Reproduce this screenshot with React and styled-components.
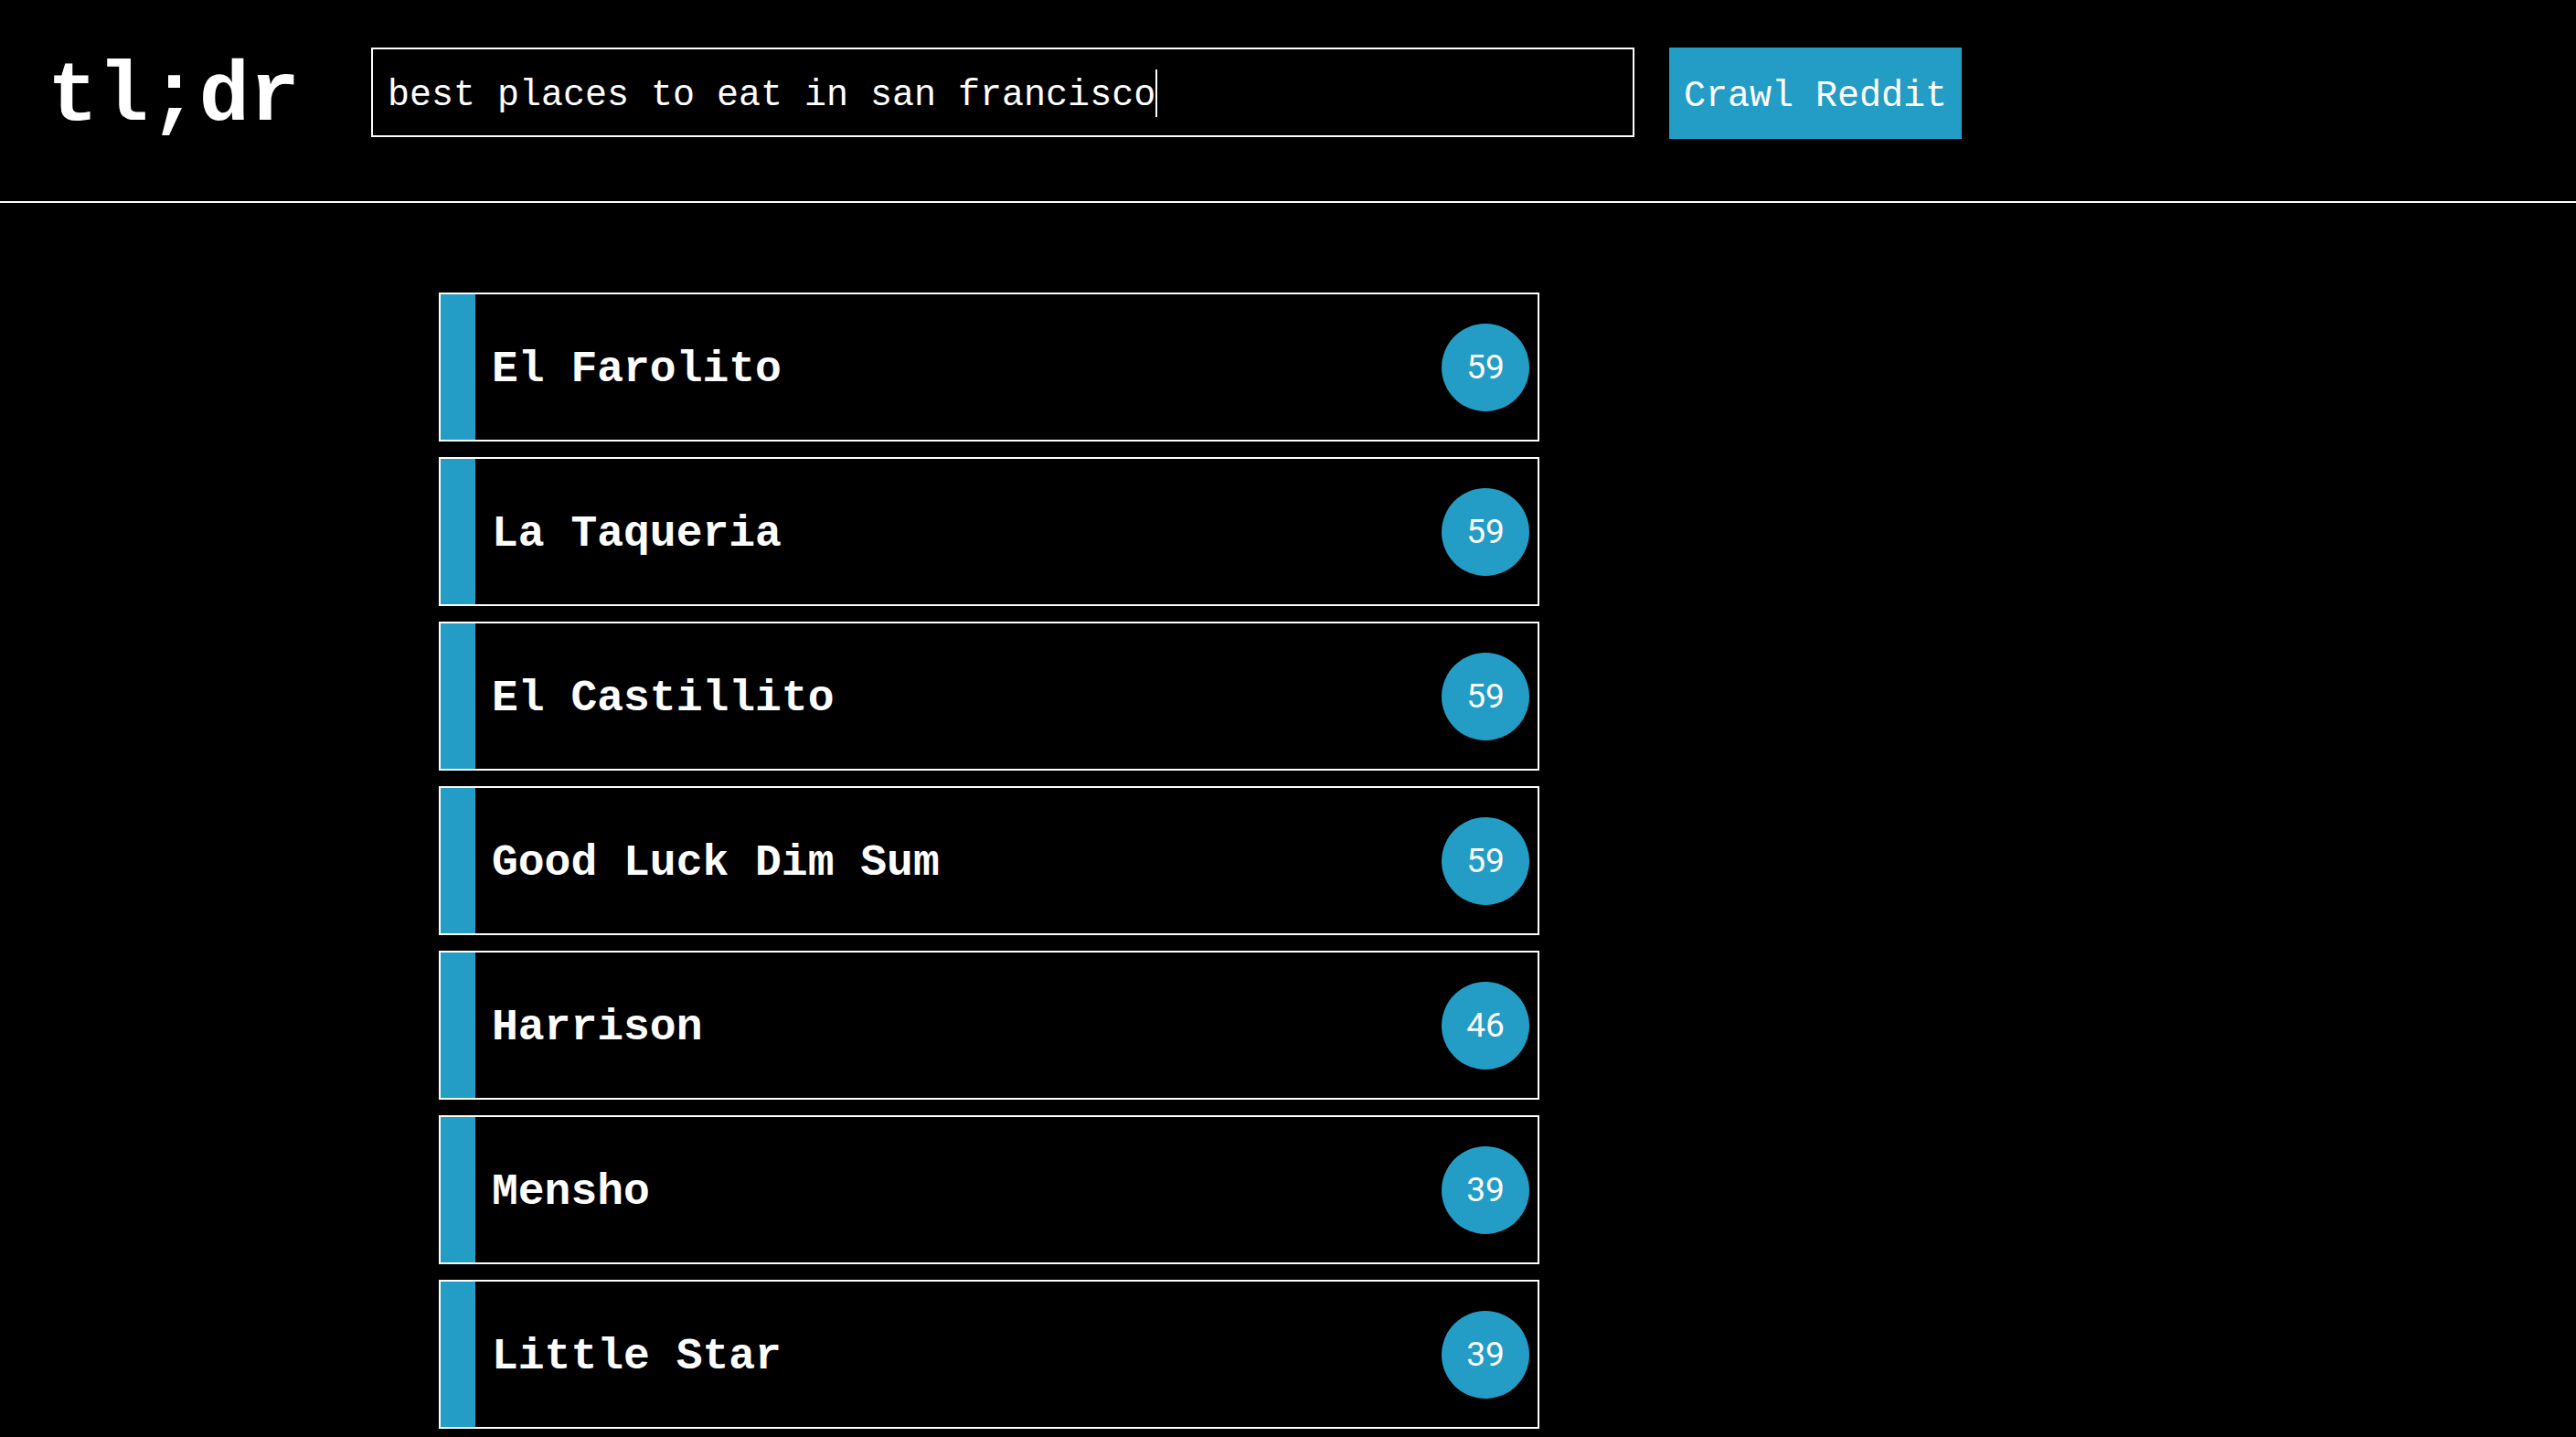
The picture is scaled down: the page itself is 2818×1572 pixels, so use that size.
import React from "react";
import styled, { createGlobalStyle } from "styled-components";

const Global = createGlobalStyle`
  html, body { margin: 0; padding: 0; background: #000; }
  body { font-family: "Liberation Mono", "DejaVu Sans Mono", monospace; color: #fff; }
`;

const BLUE = "#239dc5";

const Page = styled.div`
  min-height: 1572px;
  background: #000;
`;

const Header = styled.header`
  display: flex;
  align-items: flex-start;
  box-sizing: border-box;
  height: 222px;
  padding: 52px 0 0 52px;
  border-bottom: 2px solid #fff;
`;

const Logo = styled.h1`
  margin: 0;
  width: 354px;
  height: 98px;
  padding-top: 12px;
  box-sizing: border-box;
  display: flex;
  align-items: center;
  font-family: "Liberation Mono", monospace;
  font-size: 92px;
  font-weight: 700;
  color: #fff;
  line-height: 1;
`;

const SearchWrap = styled.div`
  position: relative;
  width: 1382px;
  height: 98px;
`;

const SearchInput = styled.input`
  box-sizing: border-box;
  width: 100%;
  height: 100%;
  background: #000;
  border: 2px solid #fff;
  color: #fff;
  font-family: "Liberation Mono", monospace;
  font-size: 40px;
  padding: 6px 16px 0;
  outline: none;
  caret-color: transparent;
`;

const Caret = styled.span`
  position: absolute;
  left: 858px;
  top: 24px;
  width: 2px;
  height: 52px;
  background: #fff;
  pointer-events: none;
`;

const CrawlButton = styled.button`
  margin-left: 38px;
  height: 100px;
  width: 320px;
  box-sizing: border-box;
  background: ${BLUE};
  border: none;
  color: #fff;
  font-family: "Liberation Mono", monospace;
  font-size: 40px;
  padding: 6px 0 0;
  white-space: nowrap;
`;

const List = styled.ul`
  list-style: none;
  margin: 0;
  padding: 98px 0 0 480px;
  display: flex;
  flex-direction: column;
  gap: 17px;
`;

const Card = styled.li`
  box-sizing: border-box;
  width: 1204px;
  height: 163px;
  border: 2px solid #fff;
  display: flex;
  align-items: center;
`;

const Accent = styled.div`
  align-self: stretch;
  width: 38px;
  background: ${BLUE};
`;

const Name = styled.span`
  flex: 1;
  padding-left: 18px;
  padding-top: 4px;
  font-family: "Liberation Mono", monospace;
  font-size: 48px;
  font-weight: 700;
  color: #fff;
`;

const Count = styled.span`
  width: 96px;
  height: 96px;
  margin-right: 9px;
  border-radius: 50%;
  background: ${BLUE};
  display: flex;
  align-items: center;
  justify-content: center;
  font-family: Roboto, "Noto Sans", sans-serif;
  font-size: 37px;
  color: #fff;
`;

const places = [
  ["El Farolito", 59],
  ["La Taqueria", 59],
  ["El Castillito", 59],
  ["Good Luck Dim Sum", 59],
  ["Harrison", 46],
  ["Mensho", 39],
  ["Little Star", 39],
];

export default function App() {
  return (
    <Page>
      <Global />
      <Header>
        <Logo>tl;dr</Logo>
        <SearchWrap>
          <SearchInput defaultValue="best places to eat in san francisco" />
          <Caret />
        </SearchWrap>
        <CrawlButton>Crawl Reddit</CrawlButton>
      </Header>
      <List>
        {places.map(([name, n]) => (
          <Card key={name}>
            <Accent />
            <Name>{name}</Name>
            <Count>{n}</Count>
          </Card>
        ))}
      </List>
    </Page>
  );
}
